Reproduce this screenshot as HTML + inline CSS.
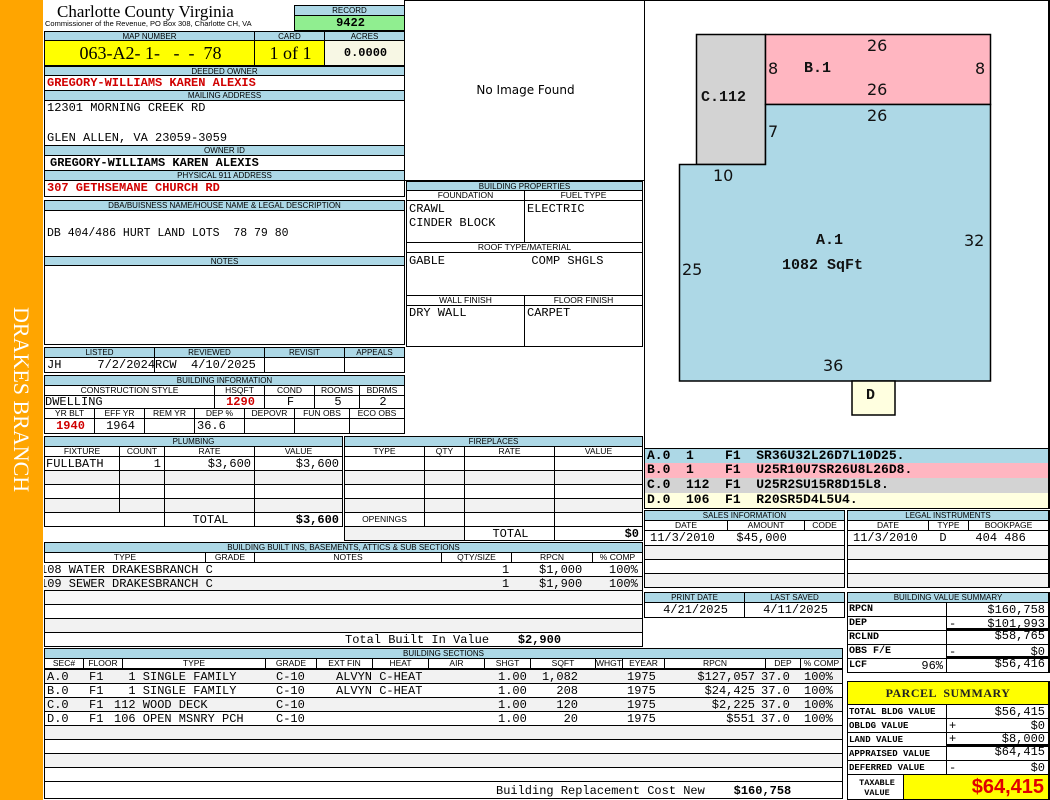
<!DOCTYPE html>
<html><head><meta charset="utf-8"><style>
*{box-sizing:border-box;margin:0;padding:0}
body{width:1050px;height:800px;position:relative;background:#fff;overflow:hidden;font-family:"Liberation Mono",monospace}
div,span.p{position:absolute}
.h{background:#add8e6;border:1px solid #000;font:8px/9px "Liberation Sans",sans-serif;text-align:center;color:#000;overflow:hidden;white-space:nowrap}
.s{border:1px solid #000;font:8.5px/9px "Liberation Sans",sans-serif;text-align:center;overflow:hidden;white-space:nowrap;background:#fff}
.c{border:1px solid #000;font:12px "Liberation Mono",monospace;white-space:pre;overflow:hidden;padding-left:2px}
.g{background:#f2f2f2}
.r{text-align:right;padding-right:3px}
.red{color:#d00000;font-weight:bold}
.b{font-weight:bold}
.t{font:16px "DejaVu Sans",sans-serif;color:#111}
.m{font:bold 15px "Liberation Mono",monospace;color:#111}
.sm{font-size:10px}
.p{top:0;white-space:pre}
</style></head><body>
<div style="left:0;top:0;width:43px;height:800px;background:#ffa500"></div>
<div style="left:0;top:0;width:43px;height:800px;writing-mode:vertical-rl;text-align:center;font:22px 'Liberation Serif',serif;color:#fff;line-height:43px">DRAKES BRANCH</div>

<div style="left:57px;top:2px;font:17px/19px 'Liberation Serif',serif">Charlotte County Virginia</div>
<div style="left:45px;top:20px;font:7.5px/8px 'Liberation Sans',sans-serif">Commissioner of the Revenue, PO Box 308, Charlotte CH, VA</div>
<div class="h" style="left:294px;top:5px;width:111px;height:11px">RECORD</div>
<div class="c b" style="left:294px;top:15px;width:111px;height:16px;background:#90ee90;text-align:center;font-size:12px;line-height:14px">9422</div>

<div class="h" style="left:44px;top:31px;width:211px;height:10px">MAP NUMBER</div>
<div class="h" style="left:254px;top:31px;width:71px;height:10px">CARD</div>
<div class="h" style="left:324px;top:31px;width:81px;height:10px">ACRES</div>
<div class="c" style="left:44px;top:40px;width:211px;height:26px;background:#ff0;font:18px/24px 'Liberation Serif',serif;text-align:center">063-A2- 1-&nbsp;&nbsp; - &nbsp;- &nbsp;78</div>
<div class="c" style="left:254px;top:40px;width:71px;height:26px;background:#ff0;font:18px/24px 'Liberation Serif',serif;text-align:center">1 of 1</div>
<div class="c b" style="left:324px;top:40px;width:81px;height:26px;background:#f7f7e4;text-align:center;line-height:24px">0.0000</div>

<div class="h" style="left:44px;top:66px;width:361px;height:10px">DEEDED OWNER</div>
<div class="c red" style="left:44px;top:75px;width:361px;height:16px;line-height:15px">GREGORY-WILLIAMS KAREN ALEXIS</div>
<div class="h" style="left:44px;top:90px;width:361px;height:11px">MAILING ADDRESS</div>
<div class="c" style="left:44px;top:100px;width:361px;height:46px;line-height:15px">12301 MORNING CREEK RD

GLEN ALLEN, VA 23059-3059</div>
<div class="h" style="left:44px;top:145px;width:361px;height:11px">OWNER ID</div>
<div class="c b" style="left:44px;top:155px;width:361px;height:16px;line-height:15px;padding-left:5px">GREGORY-WILLIAMS KAREN ALEXIS</div>
<div class="h" style="left:44px;top:170px;width:361px;height:11px">PHYSICAL 911 ADDRESS</div>
<div class="c red" style="left:44px;top:180px;width:361px;height:17px;line-height:15px">307 GETHSEMANE CHURCH RD</div>

<div class="c" style="left:404px;top:0;width:241px;height:181px;font:12px 'DejaVu Sans',sans-serif;text-align:center;line-height:178px">No Image Found</div>

<div class="h" style="left:44px;top:200px;width:361px;height:11px">DBA/BUISNESS NAME/HOUSE NAME &amp; LEGAL DESCRIPTION</div>
<div class="c" style="left:44px;top:210px;width:361px;height:47px;line-height:46px;font-size:11.5px">DB 404/486 HURT LAND LOTS  78 79 80</div>
<div class="h" style="left:44px;top:256px;width:361px;height:10px">NOTES</div>
<div class="c" style="left:44px;top:265px;width:361px;height:80px"></div>

<div class="h" style="left:406px;top:181px;width:237px;height:10px">BUILDING PROPERTIES</div>
<div class="s" style="left:406px;top:190px;width:119px;height:11px">FOUNDATION</div>
<div class="s" style="left:524px;top:190px;width:119px;height:11px">FUEL TYPE</div>
<div class="c" style="left:406px;top:200px;width:119px;height:43px;line-height:14px;padding-top:1px">CRAWL
CINDER BLOCK</div>
<div class="c" style="left:524px;top:200px;width:119px;height:43px;line-height:14px;padding-top:1px">ELECTRIC</div>
<div class="s" style="left:406px;top:242px;width:237px;height:11px">ROOF TYPE/MATERIAL</div>
<div class="c" style="left:406px;top:252px;width:237px;height:44px;line-height:14px;padding-top:1px">GABLE            COMP SHGLS</div>
<div class="s" style="left:406px;top:295px;width:119px;height:11px">WALL FINISH</div>
<div class="s" style="left:524px;top:295px;width:119px;height:11px">FLOOR FINISH</div>
<div class="c" style="left:406px;top:305px;width:119px;height:42px;line-height:14px">DRY WALL</div>
<div class="c" style="left:524px;top:305px;width:119px;height:42px;line-height:14px">CARPET</div>

<div class="h" style="left:44px;top:347px;width:111px;height:11px">LISTED</div>
<div class="h" style="left:154px;top:347px;width:111px;height:11px">REVIEWED</div>
<div class="h" style="left:264px;top:347px;width:81px;height:11px">REVISIT</div>
<div class="h" style="left:344px;top:347px;width:61px;height:11px">APPEALS</div>
<div class="c" style="left:44px;top:357px;width:111px;height:16px;line-height:14px">JH     7/2/2024</div>
<div class="c" style="left:154px;top:357px;width:111px;height:16px;line-height:14px;padding-left:0">RCW  4/10/2025</div>
<div class="c" style="left:264px;top:357px;width:81px;height:16px"></div>
<div class="c" style="left:344px;top:357px;width:61px;height:16px"></div>

<div class="h" style="left:44px;top:375px;width:361px;height:11px">BUILDING INFORMATION</div>
<div class="s" style="left:44px;top:385px;width:171px;height:11px">CONSTRUCTION STYLE</div>
<div class="s" style="left:214px;top:385px;width:51px;height:11px">HSQFT</div>
<div class="s" style="left:264px;top:385px;width:51px;height:11px">COND</div>
<div class="s" style="left:314px;top:385px;width:46px;height:11px">ROOMS</div>
<div class="s" style="left:359px;top:385px;width:46px;height:11px">BDRMS</div>
<div class="c" style="left:44px;top:395px;width:171px;height:14px;line-height:13px;padding-left:0">DWELLING</div>
<div class="c red" style="left:214px;top:395px;width:51px;height:14px;line-height:13px;text-align:center">1290</div>
<div class="c" style="left:264px;top:395px;width:51px;height:14px;line-height:13px;text-align:center">F</div>
<div class="c" style="left:314px;top:395px;width:46px;height:14px;line-height:13px;text-align:center">5</div>
<div class="c" style="left:359px;top:395px;width:46px;height:14px;line-height:13px;text-align:center">2</div>
<div class="s" style="left:44px;top:408px;width:51px;height:11px">YR BLT</div>
<div class="s" style="left:94px;top:408px;width:51px;height:11px">EFF YR</div>
<div class="s" style="left:144px;top:408px;width:51px;height:11px">REM YR</div>
<div class="s" style="left:194px;top:408px;width:51px;height:11px">DEP %</div>
<div class="s" style="left:244px;top:408px;width:51px;height:11px">DEPOVR</div>
<div class="s" style="left:294px;top:408px;width:56px;height:11px">FUN OBS</div>
<div class="s" style="left:349px;top:408px;width:56px;height:11px">ECO OBS</div>
<div class="c red" style="left:44px;top:418px;width:51px;height:16px;line-height:15px;text-align:center">1940</div>
<div class="c" style="left:94px;top:418px;width:51px;height:16px;line-height:15px;text-align:center">1964</div>
<div class="c" style="left:144px;top:418px;width:51px;height:16px"></div>
<div class="c" style="left:194px;top:418px;width:51px;height:16px;line-height:15px">36.6</div>
<div class="c" style="left:244px;top:418px;width:51px;height:16px"></div>
<div class="c" style="left:294px;top:418px;width:56px;height:16px"></div>
<div class="c" style="left:349px;top:418px;width:56px;height:16px"></div>

<div class="h" style="left:44px;top:436px;width:299px;height:11px">PLUMBING</div>
<div class="s" style="left:44px;top:446px;width:76px;height:11px">FIXTURE</div>
<div class="s" style="left:119px;top:446px;width:46px;height:11px">COUNT</div>
<div class="s" style="left:164px;top:446px;width:91px;height:11px">RATE</div>
<div class="s" style="left:254px;top:446px;width:89px;height:11px">VALUE</div>
<div class="c" style="left:44px;top:456px;width:76px;height:15px;line-height:14px;padding-left:1px">FULLBATH</div>
<div class="c r" style="left:119px;top:456px;width:46px;height:15px;line-height:14px">1</div>
<div class="c r" style="left:164px;top:456px;width:91px;height:15px;line-height:14px">$3,600</div>
<div class="c r" style="left:254px;top:456px;width:89px;height:15px;line-height:14px">$3,600</div>
<div class="c g" style="left:44px;top:470px;width:76px;height:15px"></div><div class="c g" style="left:119px;top:470px;width:46px;height:15px"></div><div class="c g" style="left:164px;top:470px;width:91px;height:15px"></div><div class="c g" style="left:254px;top:470px;width:89px;height:15px"></div>
<div class="c" style="left:44px;top:484px;width:76px;height:15px"></div><div class="c" style="left:119px;top:484px;width:46px;height:15px"></div><div class="c" style="left:164px;top:484px;width:91px;height:15px"></div><div class="c" style="left:254px;top:484px;width:89px;height:15px"></div>
<div class="c g" style="left:44px;top:498px;width:76px;height:15px"></div><div class="c g" style="left:119px;top:498px;width:46px;height:15px"></div><div class="c g" style="left:164px;top:498px;width:91px;height:15px"></div><div class="c g" style="left:254px;top:498px;width:89px;height:15px"></div>
<div class="c" style="left:44px;top:512px;width:121px;height:15px"></div>
<div class="c" style="left:164px;top:512px;width:91px;height:15px;line-height:14px;text-align:center">TOTAL</div>
<div class="c r b" style="left:254px;top:512px;width:89px;height:15px;line-height:14px">$3,600</div>

<div class="h" style="left:344px;top:436px;width:299px;height:11px">FIREPLACES</div>
<div class="s" style="left:344px;top:446px;width:81px;height:11px">TYPE</div>
<div class="s" style="left:424px;top:446px;width:41px;height:11px">QTY</div>
<div class="s" style="left:464px;top:446px;width:91px;height:11px">RATE</div>
<div class="s" style="left:554px;top:446px;width:89px;height:11px">VALUE</div>
<div class="c" style="left:344px;top:456px;width:81px;height:15px"></div><div class="c" style="left:424px;top:456px;width:41px;height:15px"></div><div class="c" style="left:464px;top:456px;width:91px;height:15px"></div><div class="c" style="left:554px;top:456px;width:89px;height:15px"></div>
<div class="c g" style="left:344px;top:470px;width:81px;height:15px"></div><div class="c g" style="left:424px;top:470px;width:41px;height:15px"></div><div class="c g" style="left:464px;top:470px;width:91px;height:15px"></div><div class="c g" style="left:554px;top:470px;width:89px;height:15px"></div>
<div class="c" style="left:344px;top:484px;width:81px;height:15px"></div><div class="c" style="left:424px;top:484px;width:41px;height:15px"></div><div class="c" style="left:464px;top:484px;width:91px;height:15px"></div><div class="c" style="left:554px;top:484px;width:89px;height:15px"></div>
<div class="c g" style="left:344px;top:498px;width:81px;height:15px"></div><div class="c g" style="left:424px;top:498px;width:41px;height:15px"></div><div class="c g" style="left:464px;top:498px;width:91px;height:15px"></div><div class="c g" style="left:554px;top:498px;width:89px;height:15px"></div>
<div class="s" style="left:344px;top:512px;width:81px;height:15px;line-height:13px">OPENINGS</div><div class="c" style="left:424px;top:512px;width:41px;height:15px"></div><div class="c" style="left:464px;top:512px;width:91px;height:15px"></div><div class="c" style="left:554px;top:512px;width:89px;height:15px"></div>
<div class="c g" style="left:344px;top:526px;width:121px;height:15px"></div>
<div class="c" style="left:464px;top:526px;width:91px;height:15px;line-height:14px;text-align:center">TOTAL</div>
<div class="c r b" style="left:554px;top:526px;width:89px;height:15px;line-height:14px">$0</div>

<div class="h" style="left:44px;top:542px;width:599px;height:11px">BUILDING BUILT INS, BASEMENTS, ATTICS &amp; SUB SECTIONS</div>
<div class="s" style="left:44px;top:552px;width:162px;height:11px">TYPE</div>
<div class="s" style="left:205px;top:552px;width:50px;height:11px">GRADE</div>
<div class="s" style="left:254px;top:552px;width:188px;height:11px">NOTES</div>
<div class="s" style="left:441px;top:552px;width:71px;height:11px">QTY/SIZE</div>
<div class="s" style="left:511px;top:552px;width:82px;height:11px">RPCN</div>
<div class="s" style="left:592px;top:552px;width:51px;height:11px">% COMP</div>
<div class="c" style="left:44px;top:562px;width:599px;height:15px;line-height:14px;padding:0;border-left:none"><span class="p" style="left:-4px">108 WATER DRAKESBRANCH C</span><span class="p" style="left:458px">1</span><span class="p" style="left:495px">$1,000</span><span class="p" style="left:565px">100%</span></div>
<div class="c g" style="left:44px;top:576px;width:599px;height:15px;line-height:14px;padding:0;border-left:none"><span class="p" style="left:-4px">109 SEWER DRAKESBRANCH C</span><span class="p" style="left:458px">1</span><span class="p" style="left:495px">$1,900</span><span class="p" style="left:565px">100%</span></div>
<div class="c" style="left:44px;top:590px;width:599px;height:15px;background:#f7f7f7"></div>
<div class="c" style="left:44px;top:604px;width:599px;height:15px"></div>
<div class="c g" style="left:44px;top:618px;width:599px;height:15px"></div>
<div class="c" style="left:44px;top:632px;width:599px;height:15px;line-height:14px;padding-left:300px">Total Built In Value    <b>$2,900</b></div>

<div class="h" style="left:44px;top:648px;width:799px;height:11px">BUILDING SECTIONS</div>
<div class="s" style="left:44px;top:658px;width:40px;height:11px">SEC#</div>
<div class="s" style="left:83px;top:658px;width:40px;height:11px">FLOOR</div>
<div class="s" style="left:122px;top:658px;width:144px;height:11px">TYPE</div>
<div class="s" style="left:265px;top:658px;width:52px;height:11px">GRADE</div>
<div class="s" style="left:316px;top:658px;width:57px;height:11px">EXT FIN</div>
<div class="s" style="left:372px;top:658px;width:57px;height:11px">HEAT</div>
<div class="s" style="left:428px;top:658px;width:57px;height:11px">AIR</div>
<div class="s" style="left:484px;top:658px;width:47px;height:11px">SHGT</div>
<div class="s" style="left:530px;top:658px;width:66px;height:11px">SQFT</div>
<div class="s" style="left:595px;top:658px;width:28px;height:11px">WHGT</div>
<div class="s" style="left:622px;top:658px;width:43px;height:11px">EYEAR</div>
<div class="s" style="left:664px;top:658px;width:102px;height:11px">RPCN</div>
<div class="s" style="left:765px;top:658px;width:36px;height:11px">DEP</div>
<div class="s" style="left:800px;top:658px;width:43px;height:11px">% COMP</div>

<div class="c g" style="left:44px;top:669px;width:799px;height:15px;line-height:14px;padding:0"><span class="p" style="left:2px">A.0</span><span class="p" style="left:44px">F1</span><span class="p" style="left:69px">  1 SINGLE FAMILY</span><span class="p" style="left:231px">C-10</span><span class="p" style="left:291px">ALVYN C-HEAT</span><span class="p" style="left:453px">1.00</span><span class="p" style="right:264px">1,082</span><span class="p" style="left:582px">1975</span><span class="p" style="right:87px">$127,057</span><span class="p" style="left:716px">37.0</span><span class="p" style="left:759px">100%</span></div>
<div class="c" style="left:44px;top:683px;width:799px;height:15px;line-height:14px;padding:0"><span class="p" style="left:2px">B.0</span><span class="p" style="left:44px">F1</span><span class="p" style="left:69px">  1 SINGLE FAMILY</span><span class="p" style="left:231px">C-10</span><span class="p" style="left:291px">ALVYN C-HEAT</span><span class="p" style="left:453px">1.00</span><span class="p" style="right:264px">208</span><span class="p" style="left:582px">1975</span><span class="p" style="right:87px">$24,425</span><span class="p" style="left:716px">37.0</span><span class="p" style="left:759px">100%</span></div>
<div class="c g" style="left:44px;top:697px;width:799px;height:15px;line-height:14px;padding:0"><span class="p" style="left:2px">C.0</span><span class="p" style="left:44px">F1</span><span class="p" style="left:69px">112 WOOD DECK</span><span class="p" style="left:231px">C-10</span><span class="p" style="left:453px">1.00</span><span class="p" style="right:264px">120</span><span class="p" style="left:582px">1975</span><span class="p" style="right:87px">$2,225</span><span class="p" style="left:716px">37.0</span><span class="p" style="left:759px">100%</span></div>
<div class="c" style="left:44px;top:711px;width:799px;height:15px;line-height:14px;padding:0"><span class="p" style="left:2px">D.0</span><span class="p" style="left:44px">F1</span><span class="p" style="left:69px">106 OPEN MSNRY PCH</span><span class="p" style="left:231px">C-10</span><span class="p" style="left:453px">1.00</span><span class="p" style="right:264px">20</span><span class="p" style="left:582px">1975</span><span class="p" style="right:87px">$551</span><span class="p" style="left:716px">37.0</span><span class="p" style="left:759px">100%</span></div>
<div class="c g" style="left:44px;top:725px;width:799px;height:15px"></div>
<div class="c" style="left:44px;top:739px;width:799px;height:15px"></div>
<div class="c g" style="left:44px;top:753px;width:799px;height:15px"></div>
<div class="c" style="left:44px;top:767px;width:799px;height:15px"></div>
<div class="c" style="left:44px;top:781px;width:799px;height:18px;line-height:18px;padding-left:451px">Building Replacement Cost New    <b>$160,758</b></div>

<div style="left:644px;top:0;width:406px;height:450px;border:1px solid #000;border-right:2px solid #000"></div>
<svg style="position:absolute;left:0;top:0" width="1050" height="450">
<rect x="696.5" y="34.5" width="69" height="130" fill="#d3d3d3" stroke="#000" stroke-width="1.5"/>
<rect x="765.5" y="34.5" width="225" height="70" fill="#ffb6c1" stroke="#000" stroke-width="1.5"/>
<polygon points="765.5,104.5 990.5,104.5 990.5,381 679.5,381 679.5,164.5 765.5,164.5" fill="#add8e6" stroke="#000" stroke-width="1.5"/>
<rect x="852" y="381" width="43" height="34" fill="#ffffe0" stroke="#000" stroke-width="1.5"/>
</svg>
<div class="t" style="left:867px;top:36px">26</div>
<div class="t" style="left:768px;top:59px">8</div>
<div class="m" style="left:804px;top:60px">B.1</div>
<div class="t" style="left:975px;top:59px">8</div>
<div class="t" style="left:867px;top:80px">26</div>
<div class="m" style="left:701px;top:89px">C.112</div>
<div class="t" style="left:867px;top:106px">26</div>
<div class="t" style="left:768px;top:122px">7</div>
<div class="t" style="left:713px;top:166px">10</div>
<div class="m" style="left:816px;top:232px">A.1</div>
<div class="t" style="left:964px;top:231px">32</div>
<div class="m" style="left:782px;top:257px">1082 SqFt</div>
<div class="t" style="left:682px;top:260px">25</div>
<div class="t" style="left:823px;top:356px">36</div>
<div class="m" style="left:866px;top:387px">D</div>

<div class="c b" style="left:644px;top:448px;width:406px;height:16px;background:#add8e6;font-size:13px;line-height:14px;border-width:1px 2px 0 1px">A.0  1    F1  SR36U32L26D7L10D25.</div>
<div class="c b" style="left:644px;top:463px;width:406px;height:15px;background:#ffb6c1;font-size:13px;line-height:14px;border-width:0 2px 0 1px">B.0  1    F1  U25R10U7SR26U8L26D8.</div>
<div class="c b" style="left:644px;top:478px;width:406px;height:15px;background:#d3d3d3;font-size:13px;line-height:14px;border-width:0 2px 0 1px">C.0  112  F1  U25R2SU15R8D15L8.</div>
<div class="c b" style="left:644px;top:493px;width:406px;height:16px;background:#ffffe0;font-size:13px;line-height:14px;border-width:0 2px 1px 1px">D.0  106  F1  R20SR5D4L5U4.</div>

<div class="h" style="left:644px;top:510px;width:201px;height:11px">SALES INFORMATION</div>
<div class="s" style="left:644px;top:520px;width:84px;height:11px">DATE</div>
<div class="s" style="left:727px;top:520px;width:78px;height:11px">AMOUNT</div>
<div class="s" style="left:804px;top:520px;width:41px;height:11px">CODE</div>
<div class="c" style="left:644px;top:530px;width:201px;height:16px;line-height:15px;padding-left:5px">11/3/2010   $45,000</div>
<div class="c g" style="left:644px;top:545px;width:201px;height:15px"></div>
<div class="c" style="left:644px;top:559px;width:201px;height:15px"></div>
<div class="c g" style="left:644px;top:573px;width:201px;height:15px"></div>
<div class="h" style="left:847px;top:510px;width:203px;height:11px;border-right-width:2px">LEGAL INSTRUMENTS</div>
<div class="s" style="left:847px;top:520px;width:82px;height:11px">DATE</div>
<div class="s" style="left:928px;top:520px;width:41px;height:11px">TYPE</div>
<div class="s" style="left:968px;top:520px;width:82px;height:11px;border-right-width:2px">BOOKPAGE</div>
<div class="c" style="left:847px;top:530px;width:203px;height:16px;line-height:15px;padding-left:5px;border-right-width:2px">11/3/2010   D    404 486</div>
<div class="c g" style="left:847px;top:545px;width:203px;height:15px;border-right-width:2px"></div>
<div class="c" style="left:847px;top:559px;width:203px;height:15px;border-right-width:2px"></div>
<div class="c g" style="left:847px;top:573px;width:203px;height:15px;border-right-width:2px"></div>

<div class="h" style="left:644px;top:592px;width:101px;height:11px">PRINT DATE</div>
<div class="h" style="left:744px;top:592px;width:101px;height:11px">LAST SAVED</div>
<div class="c" style="left:644px;top:602px;width:101px;height:16px;line-height:15px;text-align:center">4/21/2025</div>
<div class="c" style="left:744px;top:602px;width:101px;height:16px;line-height:15px;text-align:center">4/11/2025</div>

<div class="h" style="left:847px;top:592px;width:203px;height:11px;border-right-width:2px">BUILDING VALUE SUMMARY</div>
<div class="c b sm" style="left:847px;top:602px;width:100px;height:15px;line-height:14px;padding-left:1px">RPCN</div>
<div class="c r" style="left:946px;top:602px;width:104px;height:15px;line-height:14px;border-right-width:2px">$160,758</div>
<div class="c b sm" style="left:847px;top:616px;width:100px;height:15px;line-height:14px;padding-left:1px">DEP</div>
<div class="c r" style="left:946px;top:616px;width:104px;height:15px;line-height:14px;border-right-width:2px;border-bottom-width:3px"><span style="float:left">-</span>$101,993</div>
<div class="c b sm" style="left:847px;top:630px;width:100px;height:15px;line-height:14px;padding-left:1px">RCLND</div>
<div class="c r" style="left:946px;top:630px;width:104px;height:15px;line-height:13px;border-right-width:2px;border-top:none">$58,765</div>
<div class="c b sm" style="left:847px;top:644px;width:100px;height:15px;line-height:14px;padding-left:1px">OBS F/E</div>
<div class="c r" style="left:946px;top:644px;width:104px;height:15px;line-height:14px;border-right-width:2px;border-bottom-width:3px"><span style="float:left">-</span>$0</div>
<div class="c b sm" style="left:847px;top:658px;width:100px;height:15px;line-height:14px;padding-left:1px">LCF<span style="position:absolute;right:3px;font-weight:normal;font-size:12px">96%</span></div>
<div class="c r" style="left:946px;top:658px;width:104px;height:15px;line-height:13px;border-right-width:2px;border-top:none">$56,416</div>

<div style="left:847px;top:681px;width:203px;height:24px;background:#ff0;border:1px solid #000;border-right-width:2px;font:bold 12px/22px 'Liberation Serif',serif;text-align:center;color:#222;letter-spacing:0.5px">PARCEL &nbsp;SUMMARY</div>
<div class="c b" style="left:847px;top:704px;width:100px;height:15px;line-height:14px;font-size:9px;padding-left:1px">TOTAL BLDG VALUE</div>
<div class="c r" style="left:946px;top:704px;width:104px;height:15px;line-height:14px;border-right-width:2px">$56,415</div>
<div class="c b" style="left:847px;top:718px;width:100px;height:15px;line-height:14px;font-size:9px;padding-left:1px">OBLDG VALUE</div>
<div class="c r" style="left:946px;top:718px;width:104px;height:15px;line-height:14px;border-right-width:2px"><span style="float:left">+</span>$0</div>
<div class="c b" style="left:847px;top:732px;width:100px;height:15px;line-height:14px;font-size:9px;padding-left:1px">LAND VALUE</div>
<div class="c r" style="left:946px;top:732px;width:104px;height:15px;line-height:13px;border-right-width:2px;border-bottom-width:3px"><span style="float:left">+</span>$8,000</div>
<div class="c b" style="left:847px;top:746px;width:100px;height:15px;line-height:14px;font-size:9px;padding-left:1px">APPRAISED VALUE</div>
<div class="c r" style="left:946px;top:746px;width:104px;height:15px;line-height:13px;border-right-width:2px;border-top:none">$64,415</div>
<div class="c b" style="left:847px;top:760px;width:100px;height:15px;line-height:14px;font-size:9px;padding-left:1px">DEFERRED VALUE</div>
<div class="c r" style="left:946px;top:760px;width:104px;height:15px;line-height:14px;border-right-width:2px"><span style="float:left">-</span>$0</div>
<div class="c b" style="left:847px;top:774px;width:57px;height:26px;font-size:8.5px;line-height:10px;padding:3px 0 0 3px;text-align:center;white-space:normal">TAXABLE VALUE</div>
<div style="left:903px;top:774px;width:147px;height:26px;background:#ff0;border:1px solid #000;border-right-width:2px;font:bold 20px/24px 'Liberation Sans',sans-serif;color:#e00000;text-align:right;padding-right:4px">$64,415</div>
</body></html>
